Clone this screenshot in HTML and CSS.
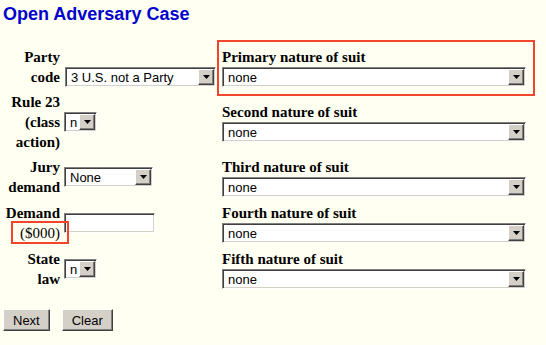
FILE: index.html
```html
<!DOCTYPE html>
<html lang="en">
<head>
    <meta charset="UTF-8">
    <meta name="viewport" content="width=device-width, initial-scale=1.0">
    <title>Open Adversary Case</title>
    <link rel="stylesheet" href="styles.css">
</head>
<body>
<h1 class="page-title">Open Adversary Case</h1>
<form class="case-form" action="/adversary_case" method="POST">
    <div class="form-rows">
        <div class="form-row">
            <label class="row-label" for="party_code">Party<br>code</label>
            <div class="row-field field-bottom">
                <span class="dropdown dd-party">
                    <select id="party_code" name="party_code">
                        <option>3 U.S. not a Party</option>
                    </select>
                    <span class="dd-button"></span>
                </span>
            </div>
            <div class="suit-cell highlighted">
                <label class="suit-label" for="suit_1">Primary nature of suit</label>
                <span class="dropdown">
                    <select id="suit_1" name="suit_1"><option>none</option></select>
                    <span class="dd-button"></span>
                </span>
            </div>
        </div>

        <div class="form-row">
            <label class="row-label" for="rule_23">Rule 23<br>(class<br>action)</label>
            <div class="row-field">
                <span class="dropdown dd-small">
                    <select id="rule_23" name="rule_23"><option>n</option><option>y</option></select>
                    <span class="dd-button"></span>
                </span>
            </div>
            <div class="suit-cell">
                <label class="suit-label" for="suit_2">Second nature of suit</label>
                <span class="dropdown">
                    <select id="suit_2" name="suit_2"><option>none</option></select>
                    <span class="dd-button"></span>
                </span>
            </div>
        </div>

        <div class="form-row">
            <label class="row-label" for="jury_demand">Jury<br>demand</label>
            <div class="row-field">
                <span class="dropdown dd-jury">
                    <select id="jury_demand" name="jury_demand"><option>None</option></select>
                    <span class="dd-button"></span>
                </span>
            </div>
            <div class="suit-cell">
                <label class="suit-label" for="suit_3">Third nature of suit</label>
                <span class="dropdown">
                    <select id="suit_3" name="suit_3"><option>none</option></select>
                    <span class="dd-button"></span>
                </span>
            </div>
        </div>

        <div class="form-row row-wide">
            <label class="row-label" for="demand">Demand<br><span class="mark">($000)</span></label>
            <div class="row-field">
                <input class="text-input" type="text" id="demand" name="demand">
            </div>
            <div class="suit-cell">
                <label class="suit-label" for="suit_4">Fourth nature of suit</label>
                <span class="dropdown">
                    <select id="suit_4" name="suit_4"><option>none</option></select>
                    <span class="dd-button"></span>
                </span>
            </div>
        </div>

        <div class="form-row row-wide">
            <label class="row-label" for="state_law">State<br>law</label>
            <div class="row-field">
                <span class="dropdown dd-small">
                    <select id="state_law" name="state_law"><option>n</option><option>y</option></select>
                    <span class="dd-button"></span>
                </span>
            </div>
            <div class="suit-cell">
                <label class="suit-label" for="suit_5">Fifth nature of suit</label>
                <span class="dropdown">
                    <select id="suit_5" name="suit_5"><option>none</option></select>
                    <span class="dd-button"></span>
                </span>
            </div>
        </div>
    </div>

    <div class="form-buttons">
        <button type="submit">Next</button>
        <button type="reset">Clear</button>
    </div>
</form>
</body>
</html>
```

FILE: styles.css
```css
body {
    font-family: "Liberation Serif", "Times New Roman", serif;
    background-color: #fffff2;
    color: #000;
    margin: 0;
    padding: 0 3px;
}

.page-title {
    font-family: "Liberation Sans", Arial, sans-serif;
    font-size: 18px;
    line-height: 21px;
    font-weight: bold;
    color: #0000cc;
    margin: 4px 0 0;
}

.form-rows {
    margin-top: 22px;
}

.form-row {
    display: flex;
    align-items: center;
}

.form-row + .form-row {
    margin-top: 5px;
}

.form-row.row-wide {
    margin-top: 6px;
}

.row-label {
    width: 57px;
    text-align: right;
    font-size: 15px;
    font-weight: bold;
    line-height: 20px;
}

.row-field {
    width: 152px;
    margin-left: 4px;
}

.field-bottom {
    align-self: flex-end;
}

.suit-cell {
    width: 304px;
    margin-left: 6px;
}

.suit-cell.highlighted {
    position: relative;
}

/* red annotation boxes */
.suit-cell.highlighted::after {
    content: "";
    position: absolute;
    top: -7px;
    bottom: -9px;
    left: -5px;
    right: -9px;
    border: 2px solid #f2452b;
}

.mark {
    position: relative;
    font-weight: normal;
}

.mark::after {
    content: "";
    position: absolute;
    top: -4px;
    bottom: -3px;
    left: -9px;
    right: -9px;
    border: 2px solid #f2452b;
}

.suit-label {
    display: block;
    font-size: 15px;
    font-weight: bold;
    line-height: 20px;
}

.dropdown {
    position: relative;
    display: block;
    width: 100%;
    height: 20px;
}

.dd-party {
    width: 151px;
    margin-left: 1px;
}

.dd-small {
    width: 33px;
}

.dd-jury {
    width: 89px;
}

.dropdown select,
.text-input {
    display: block;
    width: 100%;
    height: 20px;
    margin: 0;
    box-sizing: border-box;
    font-family: "Liberation Sans", Arial, sans-serif;
    font-size: 13px;
    color: #000;
    background-color: #fff;
    border: 1px solid;
    border-color: #808080 #fff #fff #808080;
    box-shadow: inset 1px 1px #404040, inset -1px -1px #d4d0c8;
    border-radius: 0;
    outline: none;
}

.dropdown select {
    appearance: none;
    -webkit-appearance: none;
    padding: 0 18px 0 5px;
}

.text-input {
    width: 91px;
    padding: 0 3px;
}

.dd-button {
    position: absolute;
    top: 2px;
    right: 2px;
    width: 16px;
    height: 16px;
    box-sizing: border-box;
    background-color: #d4d0c8;
    border: 1px solid;
    border-color: #fff #404040 #404040 #fff;
    box-shadow: inset -1px -1px #808080;
    pointer-events: none;
}

.dd-button::after {
    content: "";
    position: absolute;
    left: 4px;
    top: 5px;
    width: 7px;
    height: 4px;
    background-color: #000;
    clip-path: polygon(0 0, 100% 0, 50% 100%);
}

.form-buttons {
    display: flex;
    gap: 12px;
    margin-top: 20px;
}

button {
    font-family: "Liberation Sans", Arial, sans-serif;
    font-size: 13px;
    color: #000;
    height: 22px;
    padding: 0 9px;
    background-color: #d4d0c8;
    border: 1px solid;
    border-color: #fff #404040 #404040 #fff;
    box-shadow: inset -1px -1px #808080;
    border-radius: 0;
    cursor: pointer;
}
```
